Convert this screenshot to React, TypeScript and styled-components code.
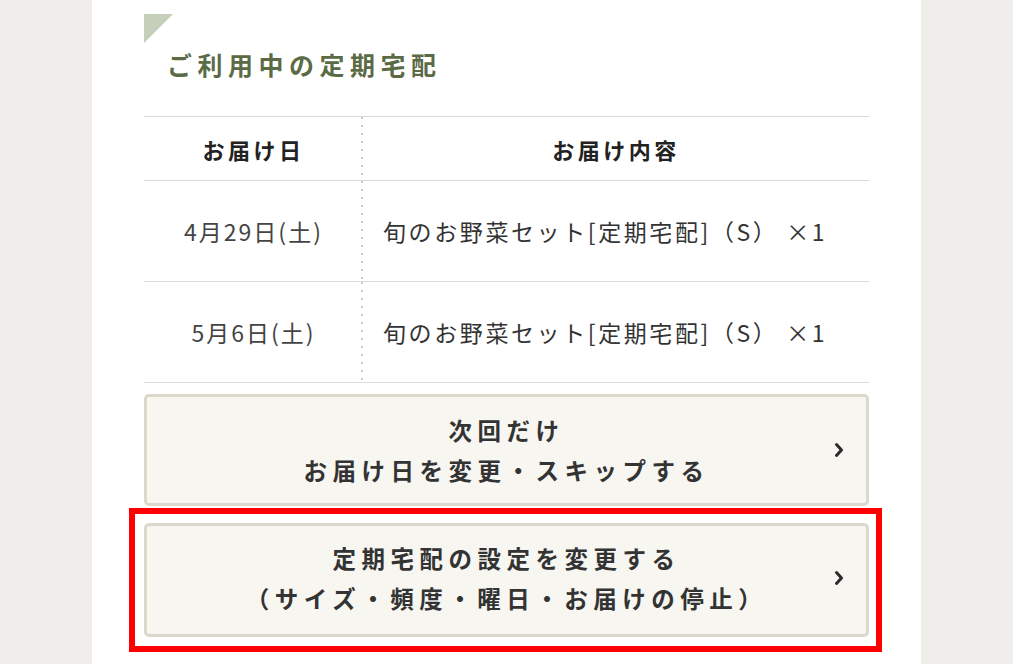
import React, { FC } from 'react';
import styled, { createGlobalStyle } from 'styled-components';

interface IDelivery {
  date: string;
  item: string;
}

const deliveries: IDelivery[] = [
  { date: '4月29日(土)', item: '旬のお野菜セット[定期宅配]（S） ×1' },
  { date: '5月6日(土)', item: '旬のお野菜セット[定期宅配]（S） ×1' },
];

const Chevron: FC = () => (
  <ChevronIcon viewBox="0 0 10 16" aria-hidden>
    <polyline points="2.5,2.5 7.5,8 2.5,13.5" />
  </ChevronIcon>
);

export default function App() {
  return (
    <Page>
      <GlobalStyle />
      <Panel>
        <Corner />
        <Title>ご利用中の定期宅配</Title>

        <Table>
          <HeadCell divider>お届け日</HeadCell>
          <HeadCell>お届け内容</HeadCell>
          {deliveries.map((d, i) => (
            <React.Fragment key={i}>
              <DateCell>{d.date}</DateCell>
              <ItemCell>{d.item}</ItemCell>
            </React.Fragment>
          ))}
        </Table>

        <Actions>
          <ActionButton>
            <ButtonText>
              次回だけ
              <br />
              お届け日を変更・スキップする
            </ButtonText>
            <Chevron />
          </ActionButton>
          <Highlight>
            <ActionButton tall>
              <ButtonText>
                定期宅配の設定を変更する
                <br />
                （サイズ・頻度・曜日・お届けの停止）
              </ButtonText>
              <Chevron />
            </ActionButton>
          </Highlight>
        </Actions>
      </Panel>
    </Page>
  );
}

//---------------------------STYLES-------------------------------------------//

const GlobalStyle = createGlobalStyle`
  html, body {
    margin: 0;
    padding: 0;
    background: #efeeea;
  }
  body {
    font-family: "Noto Sans CJK JP", "Noto Sans", sans-serif;
    color: #333;
  }
`;

const Page = styled.div`
  height: 664px;
  overflow: hidden;
  padding-left: 92px;
  display: flex;
`;

const Panel = styled.div`
  width: 829px;
  box-sizing: border-box;
  background: #fff;
  padding: 14px 52px 0 52px;
`;

const Corner = styled.div`
  width: 29px;
  height: 29px;
  background: #c6cfba;
  clip-path: polygon(0 0, 100% 0, 0 100%);
`;

const Title = styled.h2`
  margin: 6px 0 37px 23px;
  font-size: 25px;
  line-height: 30px;
  font-weight: 700;
  letter-spacing: 5.5px;
  color: #5b6b45;
`;

const Table = styled.div`
  display: grid;
  grid-template-columns: 219px 1fr;
  border-top: 1px solid #d9dde0;
`;

interface ICell {
  divider?: boolean;
}

const Cell = styled.div<ICell>`
  display: flex;
  align-items: center;
  border-bottom: 1px solid #d9dde0;
  background: ${p =>
    p.divider
      ? 'linear-gradient(to bottom, #c9cdd1 2px, transparent 2px) right top / 2px 8px repeat-y'
      : 'none'};
`;

const HeadCell = styled(Cell)`
  height: 63px;
  justify-content: center;
  font-size: 22px;
  font-weight: 700;
  letter-spacing: 3.5px;
  color: #222;
`;

const DateCell = styled(Cell).attrs({ divider: true })`
  height: 100px;
  justify-content: center;
  font-size: 23px;
  letter-spacing: 2px;
  color: #444;
`;

const ItemCell = styled(Cell)`
  height: 100px;
  padding-left: 20px;
  font-size: 23px;
  letter-spacing: 2.6px;
  color: #333;
  white-space: pre;
`;

const Actions = styled.div`
  display: flex;
  flex-direction: column;
  gap: 17px;
  margin-top: 11px;
`;

const Highlight = styled.div`
  margin: -15px -13px -15px -15px;
  padding: 9px 7px 9px 9px;
  border: 6px solid #ff0000;
`;

interface IButton {
  tall?: boolean;
}

const ActionButton = styled.div<IButton>`
  display: grid;
  grid-template-columns: 60px 1fr 60px;
  align-items: center;
  box-sizing: border-box;
  height: ${p => (p.tall ? 114 : 112)}px;
  padding-bottom: ${p => (p.tall ? 5 : 0)}px;
  background: #f7f6f1;
  border: 3px solid #dcd9cc;
  border-radius: 5px;
  cursor: pointer;
`;

const ButtonText = styled.div`
  grid-column: 2;
  text-align: center;
  font-size: 23.5px;
  line-height: 40px;
  font-weight: 700;
  letter-spacing: 5.5px;
  color: #333;
`;

const ChevronIcon = styled.svg`
  grid-column: 3;
  justify-self: end;
  margin-right: 22px;
  width: 10px;
  height: 16px;
  fill: none;
  stroke: #2a2a2a;
  stroke-width: 3;
  stroke-linecap: round;
  stroke-linejoin: round;
`;
